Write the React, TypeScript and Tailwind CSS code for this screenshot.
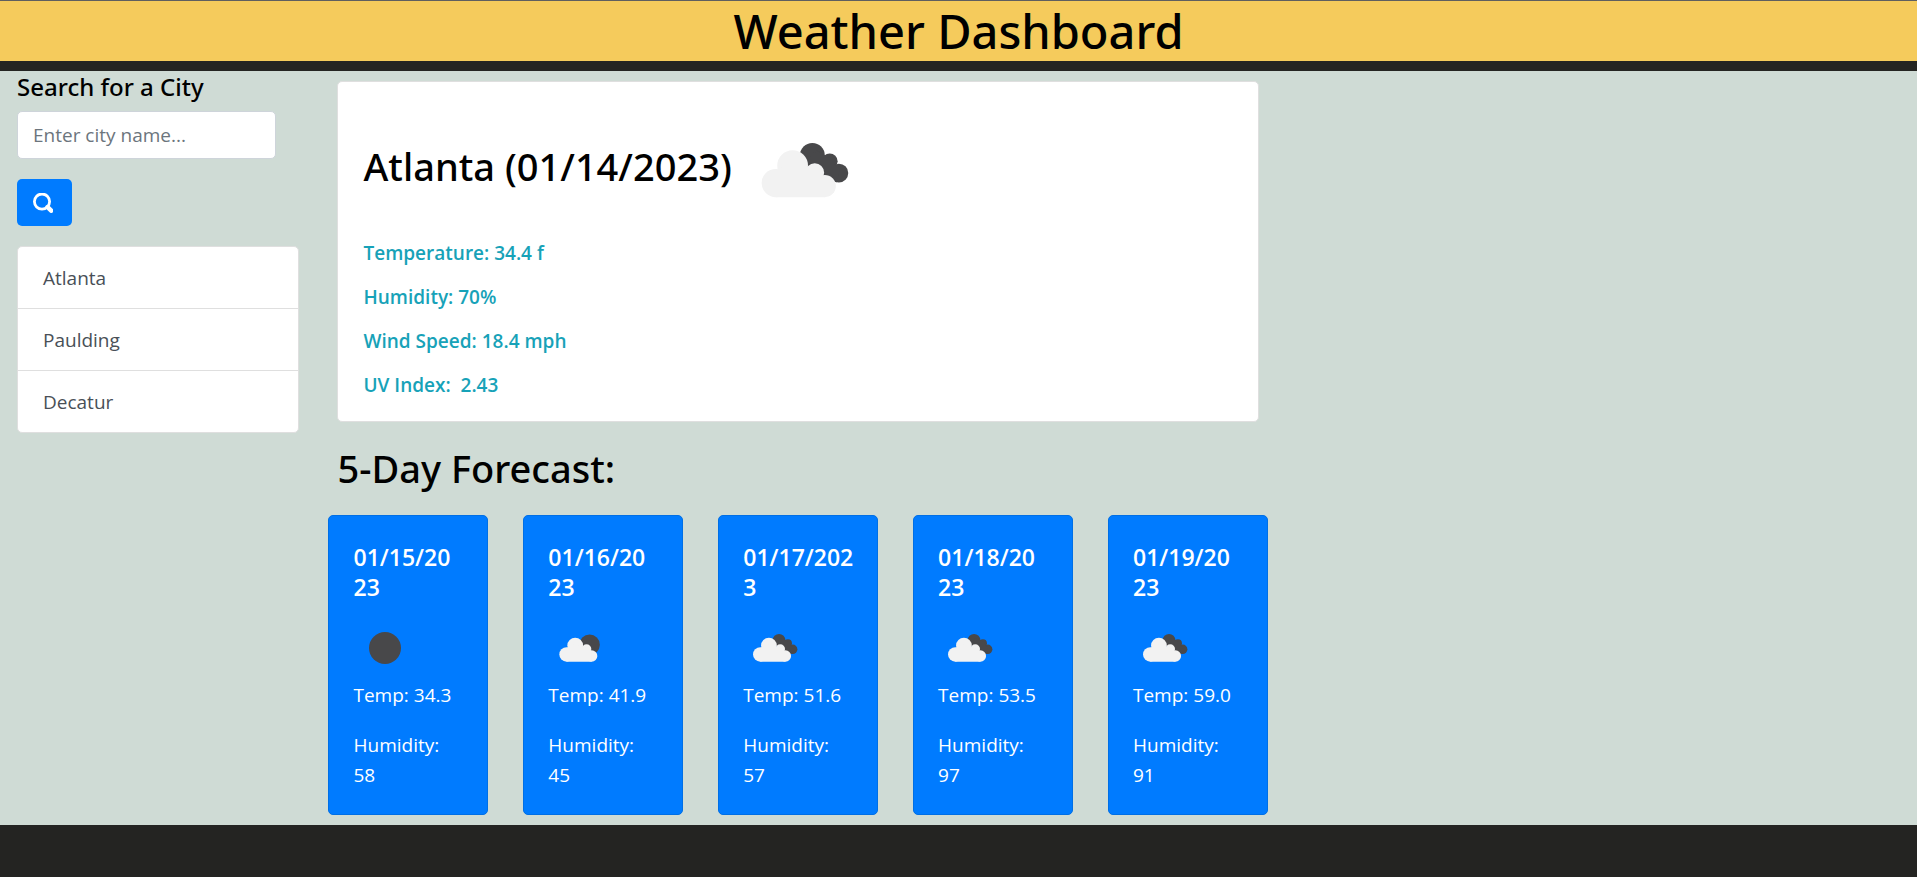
import { useState } from "react";

type Sky = "clear" | "few" | "broken";

const cities = ["Atlanta", "Paulding", "Decatur"];

const conditions = ["Temperature: 34.4 f", "Humidity: 70%", "Wind Speed: 18.4 mph", "UV Index: \u00a02.43"];

const forecast: { date: [string, string]; sky: Sky; temp: string; humidity: number }[] = [
  { date: ["01/15/20", "23"], sky: "clear", temp: "34.3", humidity: 58 },
  { date: ["01/16/20", "23"], sky: "few", temp: "41.9", humidity: 45 },
  { date: ["01/17/202", "3"], sky: "broken", temp: "51.6", humidity: 57 },
  { date: ["01/18/20", "23"], sky: "broken", temp: "53.5", humidity: 97 },
  { date: ["01/19/20", "23"], sky: "broken", temp: "59.0", humidity: 91 },
];

function FrontCloud() {
  return (
    <>
      <circle cx="27" cy="60" r="11.3" />
      <circle cx="40.5" cy="46.1" r="12.3" />
      <circle cx="58.2" cy="51.7" r="7.5" />
      <circle cx="66.2" cy="62.4" r="8.9" />
      <path d="M27 71.3 L27 50 L40 44 L58 50 L66.2 58 L66.2 71.3 Z" />
    </>
  );
}

function WeatherIcon({ sky, className }: { sky: Sky; className: string }) {
  return (
    <svg viewBox="0 0 100 100" className={className} role="img" aria-label={sky}>
      {sky === "clear" && <circle cx="50" cy="50" r="25" fill="#48484a" />}
      {sky === "few" && (
        <>
          <circle cx="65" cy="45" r="16" fill="#48484a" />
          <g fill="#f2f2f2" transform="translate(2 0)">
            <FrontCloud />
          </g>
        </>
      )}
      {sky === "broken" && (
        <>
          <g fill="#48484a">
            <circle cx="56.3" cy="37.9" r="9.9" />
            <circle cx="70.2" cy="42.6" r="6.3" />
            <circle cx="77.5" cy="52" r="7.5" />
            <path d="M50 42 L60 34 L70 40 L78 50 L76 59.4 L66 58 L56 50 Z" />
          </g>
          <g fill="#f2f2f2">
            <FrontCloud />
          </g>
        </>
      )}
    </svg>
  );
}

export default function App() {
  const [query, setQuery] = useState("");

  return (
    <div className="min-h-screen bg-[#242422] font-['Open_Sans','Noto_Sans',sans-serif] text-[19px] leading-[30px] text-black">
      <header className="border-t border-[#5f5f5f] bg-[#f5cb5c] text-center">
        <h1 className="font-['Noto_Sans',sans-serif] text-[47px] leading-[60px] font-medium">Weather Dashboard</h1>
      </header>

      <main className="mt-[10px] flex bg-[#cfdbd5] pb-[10px]">
        <aside className="w-1/6 shrink-0 pr-5 pl-[17px]">
          <form onSubmit={(e) => e.preventDefault()}>
            <label
              htmlFor="city"
              className="mt-[2px] mb-[10px] block font-['Noto_Sans',sans-serif] text-[24px] leading-7 font-medium"
            >
              Search for a City
            </label>
            <input
              id="city"
              type="text"
              value={query}
              onChange={(e) => setQuery(e.target.value)}
              placeholder="Enter city name..."
              className="block h-12 w-11/12 rounded-[5px] border border-[#ced4da] bg-white px-[15px] placeholder:text-[#6c757d]"
            />
            <button
              type="submit"
              aria-label="Search"
              className="mt-5 flex h-[47px] w-[55px] items-center rounded-[5px] bg-[#007bff] pl-4 text-white"
            >
              <svg viewBox="0 0 20 20" className="size-5" fill="none" stroke="currentColor" aria-hidden="true">
                <circle cx="9" cy="8.6" r="7.6" strokeWidth="2.8" />
                <path d="M14.6 14.2 L18.2 17.6" strokeWidth="4.6" strokeLinecap="round" />
              </svg>
            </button>
          </form>
          <ul className="mt-5 divide-y divide-[#dfdfdf] overflow-hidden rounded-[5px] border border-[#dfdfdf] bg-white text-[#495057]">
            {cities.map((city) => (
              <li key={city}>
                <button type="button" className="block w-full px-[25px] pt-4 pb-[15px] text-left">
                  {city}
                </button>
              </li>
            ))}
          </ul>
        </aside>

        <div className="w-1/2 pt-[10px]">
          <section className="mr-[19px] ml-[18px] rounded-[5px] border border-[#dfdfdf] bg-white px-[25px] pt-[26px] pb-[21px]">
            <div className="flex items-center gap-[10px]">
              <h2 className="pb-[10px] font-['Noto_Sans',sans-serif] text-[38px] leading-[48px] font-medium">
                Atlanta (01/14/2023)
              </h2>
              <WeatherIcon sky="broken" className="size-[125px] shrink-0" />
            </div>
            <div className="mt-[5px] space-y-[14px] font-semibold text-[#17a2b8]">
              {conditions.map((line) => (
                <p key={line}>{line}</p>
              ))}
            </div>
          </section>

          <h2 className="mt-[22px] mb-[23px] ml-[18px] font-['Noto_Sans',sans-serif] text-[38px] leading-[48px] font-medium">
            5-Day Forecast:
          </h2>

          <div className="mr-[10px] ml-[9px] flex justify-between">
            {forecast.map((day) => (
              <article
                key={day.date.join("")}
                className="w-[160px] rounded-[5px] border border-[#006fe6] bg-[#007bff] py-6 pr-5 pl-6 text-white"
              >
                <h3 className="pt-[2px] text-[23px] leading-[30px] font-semibold">
                  {day.date[0]}
                  <wbr />
                  {day.date[1]}
                </h3>
                <WeatherIcon sky={day.sky} className="mt-[14px] size-16" />
                <p>Temp: {day.temp}</p>
                <p className="mt-5 w-min">Humidity: {day.humidity}</p>
              </article>
            ))}
          </div>
        </div>
      </main>
    </div>
  );
}
